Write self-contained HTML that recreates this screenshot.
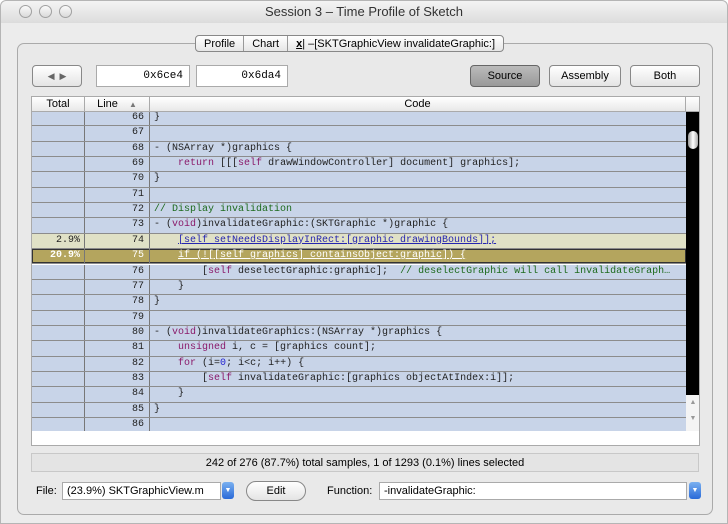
<!DOCTYPE html>
<html><head><style>
*{margin:0;padding:0;box-sizing:border-box}
body{width:728px;height:524px;background:#fff;font-family:"Liberation Sans",sans-serif;position:relative;overflow:hidden}
.win{position:absolute;left:0;top:0;width:728px;height:524px;background:#ececec;border-radius:6px 6px 0 0;border:1px solid #b5b5b5}
.title{position:absolute;left:0;top:0;width:726px;height:22px;background:linear-gradient(#f4f4f4,#dcdcdc);font-size:13px;color:#333;text-align:center;line-height:22px;border-radius:6px 6px 0 0}
.light{position:absolute;top:4px;width:13px;height:13px;border-radius:50%;border:1px solid #a0a0a0;background:linear-gradient(#fafafa,#dadada)}
.panel{position:absolute;left:16px;top:42px;width:696px;height:472px;border:1px solid #aaa;border-radius:7px;background:#e9e9e9}
.tabs{position:absolute;left:194px;top:34px;height:17px;display:flex;border:1px solid #888;border-radius:4px;background:linear-gradient(#fff,#e6e6e6);font-size:11px}
.tabs div{padding:0 8px;line-height:16px;border-right:1px solid #999}
.tabs div:last-child{border-right:none}
.btn{position:absolute;height:22px;border:1px solid #888;border-radius:4px;background:linear-gradient(#fff,#e4e4e4);font-size:11px;text-align:center;line-height:20px}
.field{position:absolute;height:22px;background:#fff;border:1px solid #aaa;font-family:"Liberation Mono",monospace;font-size:11px;text-align:right;padding-right:6px;line-height:20px}
.table{position:absolute;left:30px;top:95px;width:669px;height:350px;background:#fff;border:1px solid #aaa;overflow:hidden}
.hdr{position:absolute;left:0;top:0;height:15px;width:667px;background:linear-gradient(#fff,#e8e8e8);border-bottom:1px solid #aaa;font-size:11px;line-height:14px}
.hdr div{position:absolute;top:0;height:15px;border-right:1px solid #aaa;text-align:center}
.body{position:absolute;left:0;top:15px;width:654px;height:319px;overflow:hidden}
.row{position:absolute;left:0;width:654px;height:15.35px;background:#c8d4e8;border-bottom:1px solid #8c8c8c;font-family:"Liberation Mono",monospace;font-size:10px;line-height:14px;color:#222}
.row span.t{position:absolute;left:0;width:53px;height:100%;border-right:1px solid #777;text-align:right;padding-right:4px}
.row span.l{position:absolute;left:53px;width:65px;height:100%;border-right:1px solid #777;text-align:right;padding-right:5px}
.row span.c{position:absolute;left:122px;white-space:pre}
.k{color:#8a1a6a}.cm{color:#1d6a1d}.n{color:#2020d0}
.r74{background:#e0e1c6}.r74 .c{color:#2525b0}
.u{text-decoration:underline}
.r75{background:#b4a55e;box-shadow:inset 0 0 0 1px #333}.r75 span{color:#fff}
.sb{position:absolute;left:654px;top:15px;width:14px;height:318px;background:#000}
.thumb{position:absolute;left:656px;top:34px;width:10px;height:18px;border-radius:5px;background:linear-gradient(90deg,#999,#fff,#aaa)}
.arr{position:absolute;left:654px;top:298px;width:14px;height:36px;background:#f4f4f4;font-size:7px;color:#999;text-align:center;line-height:16px}
.status{position:absolute;left:30px;top:452px;width:668px;height:19px;border:1px solid #c8c8c8;background:#e4e4e4;font-size:11px;text-align:center;line-height:18px}
.lbl{position:absolute;top:484px;font-size:11px}
.pop{position:absolute;top:481px;height:18px;background:#fff;border:1px solid #aaa;font-size:11px;line-height:16px;padding-left:4px}
.pa{position:absolute;top:481px;width:12px;height:17px;border-radius:3px;background:linear-gradient(#7ab0f0,#2a6ad8);color:#fff;font-size:7px;text-align:center;line-height:17px}
</style></head><body>
<div class="win">
<div class="title">Session 3 – Time Profile of Sketch</div>
<div class="light" style="left:18px"></div><div class="light" style="left:38px"></div><div class="light" style="left:58px"></div>
<div class="panel"></div>
<div class="tabs"><div>Profile</div><div>Chart</div><div><b style="text-decoration:underline">x</b>| –[SKTGraphicView invalidateGraphic:]</div></div>
<div class="btn" style="left:31px;top:64px;width:50px;font-size:9px;color:#666">◀ &nbsp;▶</div>
<div class="field" style="left:95px;top:64px;width:94px">0x6ce4</div>
<div class="field" style="left:195px;top:64px;width:92px">0x6da4</div>
<div class="btn" style="left:469px;top:64px;width:70px;background:linear-gradient(#bbb,#999);border-color:#666">Source</div>
<div class="btn" style="left:548px;top:64px;width:72px">Assembly</div>
<div class="btn" style="left:629px;top:64px;width:70px">Both</div>
<div class="table">
<div class="hdr"><div style="left:0;width:53px">Total</div><div style="left:53px;width:65px">Line <span style="font-size:8px;color:#777;margin-left:8px">▲</span></div><div style="left:118px;width:536px">Code</div></div>
<div class="body">
<div class="row" style="top:-1px"><span class="t"></span><span class="l">66</span><span class="c">}</span></div>
<div class="row" style="top:14.35px"><span class="t"></span><span class="l">67</span><span class="c"></span></div>
<div class="row" style="top:29.7px"><span class="t"></span><span class="l">68</span><span class="c">- (NSArray *)graphics {</span></div>
<div class="row" style="top:45.05px"><span class="t"></span><span class="l">69</span><span class="c">    <span class="k">return</span> [[[<span class="k">self</span> drawWindowController] document] graphics];</span></div>
<div class="row" style="top:60.4px"><span class="t"></span><span class="l">70</span><span class="c">}</span></div>
<div class="row" style="top:75.75px"><span class="t"></span><span class="l">71</span><span class="c"></span></div>
<div class="row" style="top:91.1px"><span class="t"></span><span class="l">72</span><span class="c cm">// Display invalidation</span></div>
<div class="row" style="top:106.45px"><span class="t"></span><span class="l">73</span><span class="c">- (<span class="k">void</span>)invalidateGraphic:(SKTGraphic *)graphic {</span></div>
<div class="row r74" style="top:121.8px"><span class="t">2.9%</span><span class="l">74</span><span class="c">    <span class="u">[self setNeedsDisplayInRect:[graphic drawingBounds]];</span></span></div>
<div class="row r75" style="top:137.15px"><span class="t" style="font-weight:bold">20.9%</span><span class="l">75</span><span class="c">    <span class="u">if (![[self graphics] containsObject:graphic]) {</span></span></div>
<div class="row" style="top:152.5px"><span class="t"></span><span class="l">76</span><span class="c">        [<span class="k">self</span> deselectGraphic:graphic];  <span class="cm">// deselectGraphic will call invalidateGraph…</span></span></div>
<div class="row" style="top:167.85px"><span class="t"></span><span class="l">77</span><span class="c">    }</span></div>
<div class="row" style="top:183.2px"><span class="t"></span><span class="l">78</span><span class="c">}</span></div>
<div class="row" style="top:198.55px"><span class="t"></span><span class="l">79</span><span class="c"></span></div>
<div class="row" style="top:213.9px"><span class="t"></span><span class="l">80</span><span class="c">- (<span class="k">void</span>)invalidateGraphics:(NSArray *)graphics {</span></div>
<div class="row" style="top:229.25px"><span class="t"></span><span class="l">81</span><span class="c">    <span class="k">unsigned</span> i, c = [graphics count];</span></div>
<div class="row" style="top:244.6px"><span class="t"></span><span class="l">82</span><span class="c">    <span class="k">for</span> (i=<span class="n">0</span>; i&lt;c; i++) {</span></div>
<div class="row" style="top:259.95px"><span class="t"></span><span class="l">83</span><span class="c">        [<span class="k">self</span> invalidateGraphic:[graphics objectAtIndex:i]];</span></div>
<div class="row" style="top:275.3px"><span class="t"></span><span class="l">84</span><span class="c">    }</span></div>
<div class="row" style="top:290.65px"><span class="t"></span><span class="l">85</span><span class="c">}</span></div>
<div class="row" style="top:306px"><span class="t"></span><span class="l">86</span><span class="c"></span></div>
</div>
<div class="sb"></div><div class="thumb"></div>
<div class="arr">▲<br>▼</div>
</div>
<div class="status">242 of 276 (87.7%) total samples, 1 of 1293 (0.1%) lines selected</div>
<div class="lbl" style="left:35px">File:</div>
<div class="pop" style="left:61px;width:159px">(23.9%) SKTGraphicView.m</div>
<div class="pa" style="left:221px">▼</div>
<div class="btn" style="left:245px;top:480px;width:60px;height:20px;border-radius:10px;line-height:18px">Edit</div>
<div class="lbl" style="left:326px">Function:</div>
<div class="pop" style="left:378px;width:308px">-invalidateGraphic:</div>
<div class="pa" style="left:688px">▼</div>
</div>
</body></html>
